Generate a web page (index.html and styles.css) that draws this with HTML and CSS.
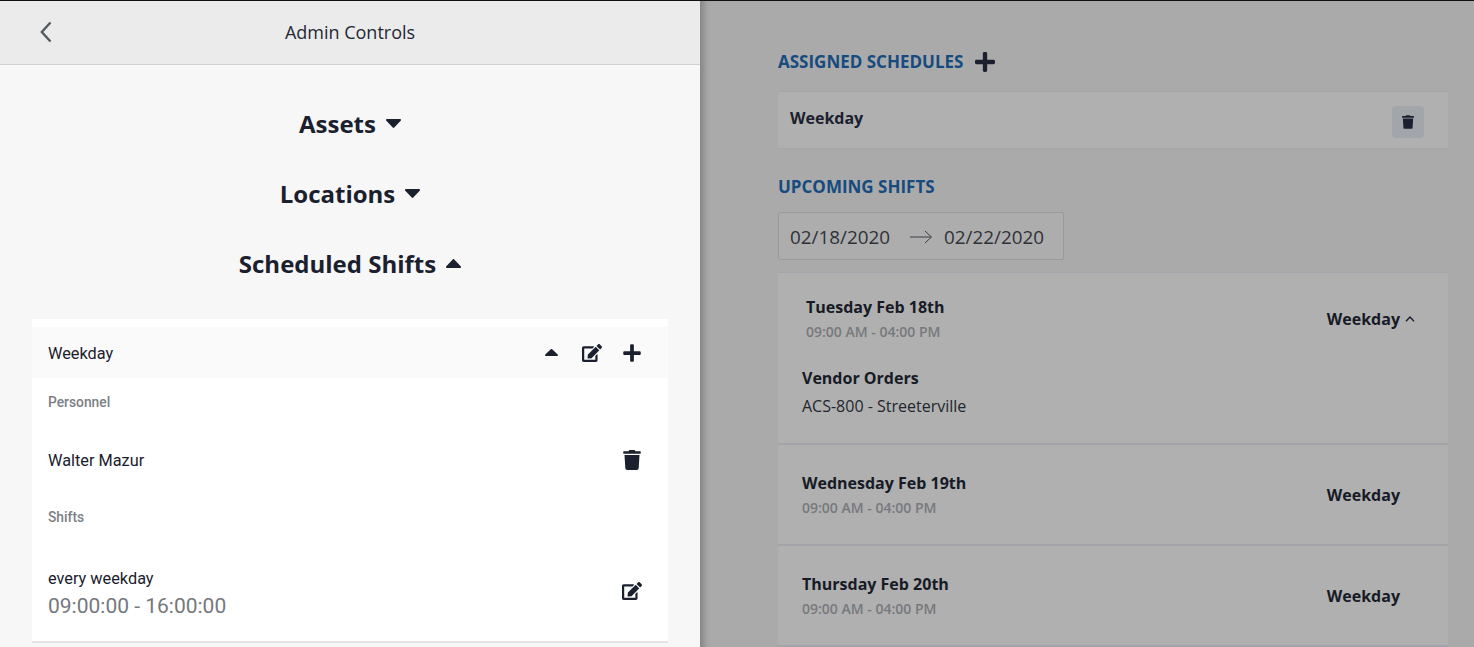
FILE: index.html
```html
<!DOCTYPE html>
<html lang="en">
<head>
  <meta charset="UTF-8">
  <meta name="viewport" content="width=device-width, initial-scale=1.0">
  <title>Admin Controls</title>
  <link rel="stylesheet" href="styles.css">
</head>
<body>
  <svg class="icon-defs" aria-hidden="true">
    <symbol id="i-trash" viewBox="0 0 448 512"><path d="M432 32H312l-9.4-18.7A24 24 0 0 0 281.1 0H166.8a23.72 23.72 0 0 0-21.4 13.3L136 32H16A16 16 0 0 0 0 48v32a16 16 0 0 0 16 16h416a16 16 0 0 0 16-16V48a16 16 0 0 0-16-16zM53.2 467a48 48 0 0 0 47.9 45h245.8a48 48 0 0 0 47.9-45L416 128H32z"/></symbol>
    <symbol id="i-edit" viewBox="0 0 576 512"><path d="M402.6 83.2l90.2 90.2c3.8 3.8 3.8 10 0 13.8L274.4 405.6l-92.8 10.3c-12.4 1.4-22.9-9.1-21.5-21.5l10.3-92.8L388.8 83.2c3.8-3.8 10-3.8 13.8 0zm162-22.9l-48.8-48.8c-15.2-15.2-39.9-15.2-55.2 0l-35.4 35.4c-3.8 3.8-3.8 10 0 13.8l90.2 90.2c3.8 3.8 10 3.8 13.8 0l35.4-35.4c15.2-15.3 15.2-40 0-55.2zM384 346.2V448H64V128h229.8c3.2 0 6.2-1.3 8.5-3.5l40-40c7.6-7.6 2.2-20.5-8.5-20.5H48C21.5 64 0 85.5 0 112v352c0 26.5 21.5 48 48 48h352c26.5 0 48-21.5 48-48V306.2c0-10.7-12.9-16-20.5-8.5l-40 40c-2.2 2.3-3.5 5.3-3.5 8.5z"/></symbol>
    <symbol id="i-plus" viewBox="0 0 448 512"><path d="M416 208H272V64c0-17.67-14.33-32-32-32h-32c-17.67 0-32 14.33-32 32v144H32c-17.67 0-32 14.33-32 32v32c0 17.67 14.33 32 32 32h144v144c0 17.67 14.33 32 32 32h32c17.67 0 32-14.33 32-32V304h144c17.67 0 32-14.33 32-32v-32c0-17.67-14.33-32-32-32z"/></symbol>
    <symbol id="i-down" viewBox="0 0 14 8" preserveAspectRatio="none"><path d="M1 0h12c.9 0 1.3 1 .7 1.6L7.7 7.6c-.4.4-1 .4-1.4 0L.3 1.6C-.3 1 .1 0 1 0z"/></symbol>
    <symbol id="i-up" viewBox="0 0 14 8" preserveAspectRatio="none"><path d="M1 8h12c.9 0 1.3-1 .7-1.6L7.7.4c-.4-.4-1-.4-1.4 0L.3 6.4C-.3 7 .1 8 1 8z"/></symbol>
  </svg>

  <div class="page">
    <!-- Left panel -->
    <main class="admin">
      <header class="admin-head">
        <svg class="back" viewBox="0 0 12 22"><path d="M10.5 1.5 1.8 11l8.7 9.5"/></svg>
        <h1>Admin Controls</h1>
      </header>

      <div class="sections">
        <h2 class="section-title">Assets <svg class="caret"><use href="#i-down"/></svg></h2>
        <h2 class="section-title">Locations <svg class="caret"><use href="#i-down"/></svg></h2>
        <h2 class="section-title">Scheduled Shifts <svg class="caret"><use href="#i-up"/></svg></h2>
      </div>

      <section class="card">
        <div class="card-head">
          <span class="card-name">Weekday</span>
          <div class="card-actions">
            <svg class="caret-sm"><use href="#i-up"/></svg>
            <svg class="ico-edit"><use href="#i-edit"/></svg>
            <svg class="ico-plus"><use href="#i-plus"/></svg>
          </div>
        </div>
        <div class="label label-personnel">Personnel</div>
        <div class="person">
          <span>Walter Mazur</span>
          <svg class="ico-trash"><use href="#i-trash"/></svg>
        </div>
        <div class="label">Shifts</div>
        <div class="shift">
          <div>
            <div class="shift-name">every weekday</div>
            <div class="shift-time">09:00:00 - 16:00:00</div>
          </div>
          <svg class="ico-edit shift-edit"><use href="#i-edit"/></svg>
        </div>
      </section>
    </main>

    <!-- Dimmed right panel -->
    <aside class="detail">
      <h3 class="detail-title first">ASSIGNED SCHEDULES <svg class="ico-plus-lg"><use href="#i-plus"/></svg></h3>
      <div class="assigned">
        <strong>Weekday</strong>
        <button class="trash-btn"><svg class="ico-trash-sm"><use href="#i-trash"/></svg></button>
      </div>

      <h3 class="detail-title">UPCOMING SHIFTS</h3>
      <div class="range">
        <span>02/18/2020</span>
        <svg class="arrow" viewBox="0 0 24 14"><path d="M1 7h21M16 1l6.5 6-6.5 6"/></svg>
        <span>02/22/2020</span>
      </div>

      <div class="shift-list">
        <div class="day day-open">
          <div class="day-row day-row-open">
            <div>
              <div class="day-name">Tuesday Feb 18th</div>
              <div class="day-time">09:00 AM - 04:00 PM</div>
            </div>
            <div class="day-tag">Weekday <svg class="chev" viewBox="0 0 10 6"><path d="M1 5.2 5 1l4 4.2"/></svg></div>
          </div>
          <div class="day-extra">
            <div class="day-name">Vendor Orders</div>
            <div class="day-place">ACS-800 - Streeterville</div>
          </div>
        </div>
        <div class="day">
          <div class="day-row">
            <div>
              <div class="day-name">Wednesday Feb 19th</div>
              <div class="day-time">09:00 AM - 04:00 PM</div>
            </div>
            <div class="day-tag">Weekday</div>
          </div>
        </div>
        <div class="day">
          <div class="day-row">
            <div>
              <div class="day-name">Thursday Feb 20th</div>
              <div class="day-time">09:00 AM - 04:00 PM</div>
            </div>
            <div class="day-tag">Weekday</div>
          </div>
        </div>
      </div>
    </aside>
  </div>
</body>
</html>
```

FILE: styles.css
```css
*{
  box-sizing: border-box;
}
html, body{
  height: 100%;
  margin: 0;
  overflow: hidden;
}
body{
  font-family: "Open Sans", sans-serif;
  color: #1a202e;
  background: #aaa;
}
.icon-defs{
  display: none;
}
svg{
  fill: currentColor;
  flex: none;
}
.page{
  display: flex;
  height: 647px;
  border-top: 1px solid #111;
}

/* left panel */
.admin{
  width: 700px;
  flex: none;
  background: #f7f7f7;
  overflow: hidden;
}
.admin-head{
  height: 64px;
  padding-left: 40px;
  display: flex;
  align-items: center;
  background: #ebebeb;
  border-bottom: 1px solid #d2d2d2;
}
.back{
  width: 12px;
  height: 22px;
  fill: none;
  stroke: #555a63;
  stroke-width: 2.4;
  margin-bottom: 2px;
}
.admin-head h1{
  flex: 1;
  margin: 0 52px 2px 0;
  text-align: center;
  font-size: 18px;
  font-weight: 400;
  line-height: 24px;
  color: #232833;
}
.sections{
  padding-top: 23px;
}
.section-title{
  height: 70px;
  margin: 0;
  display: flex;
  justify-content: center;
  align-items: center;
  gap: 10px;
  font-size: 24px;
  font-weight: 700;
}
.caret{
  width: 15px;
  height: 9px;
}
.card{
  margin: 21px 32px 0;
  padding-top: 8px;
  background: #fff;
  font-family: Roboto, sans-serif;
  font-size: 16.3px;
}
.card-head{
  height: 51px;
  padding: 0 27px 0 16px;
  display: flex;
  justify-content: space-between;
  align-items: center;
  background: #fafafa;
}
.card-name{
  padding-top: 2px;
}
.card-actions{
  display: flex;
  align-items: center;
}
.caret-sm{
  width: 13px;
  height: 7px;
  margin-right: 24px;
}
.ico-edit{
  width: 20px;
  height: 18px;
}
.ico-plus{
  width: 18px;
  height: 20px;
  margin-left: 21px;
}
.label{
  padding-left: 16px;
  font-size: 13.8px;
  font-weight: 500;
  line-height: 18px;
  color: #7b7f85;
}
.label-personnel{
  padding-top: 15px;
}
.person{
  height: 96px;
  margin-top: 1px;
  padding: 0 27px 0 16px;
  display: flex;
  justify-content: space-between;
  align-items: center;
}
.ico-trash{
  width: 18px;
  height: 20px;
}
.shift{
  height: 117px;
  padding: 22px 26px 0 16px;
  display: flex;
  justify-content: space-between;
  align-items: center;
  border-bottom: 2px solid #e4e4e6;
}
.shift-edit{
  margin-bottom: 7px;
}
.shift-name{
  line-height: 22px;
}
.shift-time{
  font-size: 21px;
  line-height: 32px;
  color: #75787d;
}

.detail{
  flex: 1;
  padding: 0 26px 0 78px;
  overflow: hidden;
  box-shadow: inset 9px 0 6px -5px #858585;
}
.detail-title{
  margin: 0;
  display: flex;
  align-items: center;
  gap: 12px;
  font-size: 17px;
  font-weight: 700;
  line-height: 24px;
  color: #164b80;
}
.detail-title.first{
  padding-top: 49px;
}
.ico-plus-lg{
  width: 20px;
  height: 24px;
  color: #1a202e;
}
.assigned{
  height: 58px;
  margin: 17px 0 26px;
  padding: 0 24px 0 12px;
  display: flex;
  justify-content: space-between;
  align-items: center;
  background: #b0b0b0;
  border-top: 1px solid #a3a5ab;
  border-bottom: 1px solid #a6a7aa;
  font-size: 16px;
}
.assigned strong{
  margin-bottom: 4px;
}
.trash-btn{
  width: 32px;
  height: 32px;
  padding: 0;
  display: flex;
  justify-content: center;
  align-items: center;
  color: #1a202e;
  background: #a2a5a9;
  border: 0;
  border-radius: 4px;
  margin-top: 4px;
}
.ico-trash-sm{
  width: 12px;
  height: 14px;
}
.range{
  width: 286px;
  height: 48px;
  margin-top: 13px;
  padding: 2px 11px 0;
  display: flex;
  align-items: center;
  background: #adadad;
  border: 1px solid #9a9a9a;
  border-radius: 2px;
  font-size: 18.85px;
  color: #2f3238;
}
.arrow{
  width: 24px;
  height: 14px;
  margin: 0 11px 0 19px;
  fill: none;
  stroke: #3d3f44;
  stroke-width: 1;
}
.shift-list{
  margin-top: 12px;
  background: #b0b0b0;
  border-top: 1px solid #a3a5ab;
}
.day{
  border-bottom: 2px solid #a3a4a9;
}
.day-row{
  height: 99px;
  padding: 1px 48px 0 24px;
  display: flex;
  justify-content: space-between;
  align-items: center;
}
.day-row-open{
  height: 84px;
  padding: 8px 33px 0 28px;
}
.day-name{
  font-size: 16px;
  font-weight: 700;
  line-height: 24px;
  color: #171b26;
}
.day-time{
  margin-top: 2px;
  font-size: 14px;
  font-weight: 600;
  line-height: 22px;
  color: #77797d;
}
.day-tag{
  display: flex;
  align-items: center;
  gap: 5px;
  font-size: 16px;
  font-weight: 700;
  color: #171b26;
}
.chev{
  width: 10px;
  height: 6px;
  fill: none;
  stroke: #171b26;
  stroke-width: 1.3;
}
.day-extra{
  height: 86px;
  padding: 9px 24px 0;
}
.day-place{
  margin-top: 4px;
  font-size: 16px;
  line-height: 24px;
  color: #22262f;
}
```
